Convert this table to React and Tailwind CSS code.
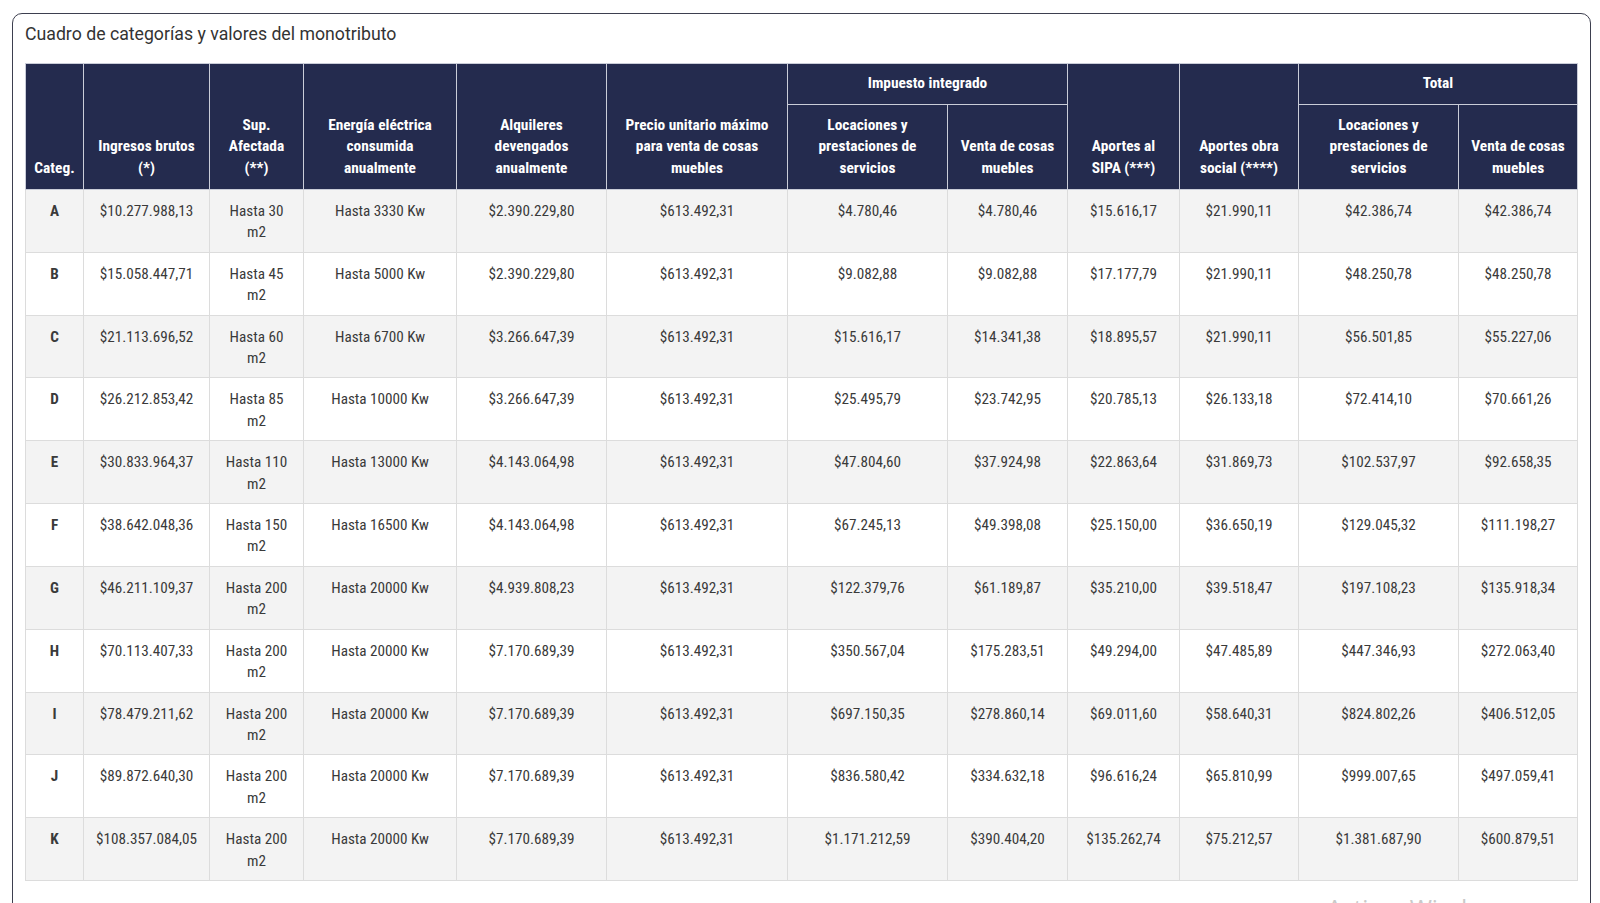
import React from "react";

const rows = [
  ["A", "$10.277.988,13", "30", "Hasta 3330 Kw", "$2.390.229,80", "$613.492,31", "$4.780,46", "$4.780,46", "$15.616,17", "$21.990,11", "$42.386,74", "$42.386,74"],
  ["B", "$15.058.447,71", "45", "Hasta 5000 Kw", "$2.390.229,80", "$613.492,31", "$9.082,88", "$9.082,88", "$17.177,79", "$21.990,11", "$48.250,78", "$48.250,78"],
  ["C", "$21.113.696,52", "60", "Hasta 6700 Kw", "$3.266.647,39", "$613.492,31", "$15.616,17", "$14.341,38", "$18.895,57", "$21.990,11", "$56.501,85", "$55.227,06"],
  ["D", "$26.212.853,42", "85", "Hasta 10000 Kw", "$3.266.647,39", "$613.492,31", "$25.495,79", "$23.742,95", "$20.785,13", "$26.133,18", "$72.414,10", "$70.661,26"],
  ["E", "$30.833.964,37", "110", "Hasta 13000 Kw", "$4.143.064,98", "$613.492,31", "$47.804,60", "$37.924,98", "$22.863,64", "$31.869,73", "$102.537,97", "$92.658,35"],
  ["F", "$38.642.048,36", "150", "Hasta 16500 Kw", "$4.143.064,98", "$613.492,31", "$67.245,13", "$49.398,08", "$25.150,00", "$36.650,19", "$129.045,32", "$111.198,27"],
  ["G", "$46.211.109,37", "200", "Hasta 20000 Kw", "$4.939.808,23", "$613.492,31", "$122.379,76", "$61.189,87", "$35.210,00", "$39.518,47", "$197.108,23", "$135.918,34"],
  ["H", "$70.113.407,33", "200", "Hasta 20000 Kw", "$7.170.689,39", "$613.492,31", "$350.567,04", "$175.283,51", "$49.294,00", "$47.485,89", "$447.346,93", "$272.063,40"],
  ["I", "$78.479.211,62", "200", "Hasta 20000 Kw", "$7.170.689,39", "$613.492,31", "$697.150,35", "$278.860,14", "$69.011,60", "$58.640,31", "$824.802,26", "$406.512,05"],
  ["J", "$89.872.640,30", "200", "Hasta 20000 Kw", "$7.170.689,39", "$613.492,31", "$836.580,42", "$334.632,18", "$96.616,24", "$65.810,99", "$999.007,65", "$497.059,41"],
  ["K", "$108.357.084,05", "200", "Hasta 20000 Kw", "$7.170.689,39", "$613.492,31", "$1.171.212,59", "$390.404,20", "$135.262,74", "$75.212,57", "$1.381.687,90", "$600.879,51"],
];

const widths = [58, 126, 94, 153, 150, 181, 160, 120, 112, 119, 160, 119];

const condensed = { fontFamily: '"Roboto Condensed", "Liberation Sans Narrow", "DejaVu Sans Condensed", Roboto, sans-serif' };

const th = "border border-[#c9ccd8] bg-[#242b4e] px-2 text-center align-bottom text-[15.4px] font-bold leading-[21.4px] text-white";
const td = "border border-[#dcdcdc] px-2 pt-[11px] pb-[8px] text-center align-top text-[15.2px] leading-[21.4px] text-[#3a3a3a]";

function Lines({ items }) {
  return items.map((t, i) => (
    <React.Fragment key={i}>
      {i > 0 && <br />}
      {t}
    </React.Fragment>
  ));
}

export default function App() {
  return (
    <div className="relative h-[903px] w-[1600px] overflow-hidden bg-white" style={{ fontFamily: "Roboto, sans-serif" }}>
      <div className="ml-[12px] mt-[13px] h-[950px] w-[1579px] rounded-t-[10px] border-[1.5px] border-[#3d3f4f] px-[12px]">
        <h1 className="pt-[9px] text-[17.7px] leading-[22px] text-[#333]">
          Cuadro de categorías y valores del monotributo
        </h1>

        <table className="mt-[18px] w-[1552px] table-fixed border-collapse" style={condensed}>
          <colgroup>
            {widths.map((w, i) => (
              <col key={i} style={{ width: w }} />
            ))}
          </colgroup>
          <thead>
            <tr className="h-[41px]">
              <th rowSpan={2} className={`${th} pb-[10px]`}>Categ.</th>
              <th rowSpan={2} className={`${th} pb-[10px]`}><Lines items={["Ingresos brutos", "(*)"]} /></th>
              <th rowSpan={2} className={`${th} pb-[10px]`}><Lines items={["Sup.", "Afectada", "(**)"]} /></th>
              <th rowSpan={2} className={`${th} pb-[10px]`}><Lines items={["Energía eléctrica", "consumida", "anualmente"]} /></th>
              <th rowSpan={2} className={`${th} pb-[10px]`}><Lines items={["Alquileres", "devengados", "anualmente"]} /></th>
              <th rowSpan={2} className={`${th} pb-[10px]`}><Lines items={["Precio unitario máximo", "para venta de cosas", "muebles"]} /></th>
              <th colSpan={2} className={`${th} !align-middle`}>Impuesto integrado</th>
              <th rowSpan={2} className={`${th} pb-[10px]`}><Lines items={["Aportes al", "SIPA (***)"]} /></th>
              <th rowSpan={2} className={`${th} pb-[10px]`}><Lines items={["Aportes obra", "social (****)"]} /></th>
              <th colSpan={2} className={`${th} !align-middle`}>Total</th>
            </tr>
            <tr className="h-[85px]">
              <th className={`${th} pb-[10px]`}><Lines items={["Locaciones y", "prestaciones de", "servicios"]} /></th>
              <th className={`${th} pb-[10px]`}><Lines items={["Venta de cosas", "muebles"]} /></th>
              <th className={`${th} pb-[10px]`}><Lines items={["Locaciones y", "prestaciones de", "servicios"]} /></th>
              <th className={`${th} pb-[10px]`}><Lines items={["Venta de cosas", "muebles"]} /></th>
            </tr>
          </thead>
          <tbody>
            {rows.map((r, i) => (
              <tr key={r[0]} className={i % 2 === 0 ? "bg-[#f3f3f3]" : "bg-white"}>
                <td className={`${td} font-bold`}>{r[0]}</td>
                <td className={td}>{r[1]}</td>
                <td className={td}>Hasta {r[2]}<br />m2</td>
                {r.slice(3).map((v, j) => (
                  <td key={j} className={td}>{v}</td>
                ))}
              </tr>
            ))}
          </tbody>
        </table>
      </div>

      <div className="absolute left-[1327px] top-[893px] text-[24px] leading-[30px] text-[#c9c9c9]" style={{ fontFamily: '"Open Sans", sans-serif' }}>
        Activar Windows
      </div>
    </div>
  );
}
